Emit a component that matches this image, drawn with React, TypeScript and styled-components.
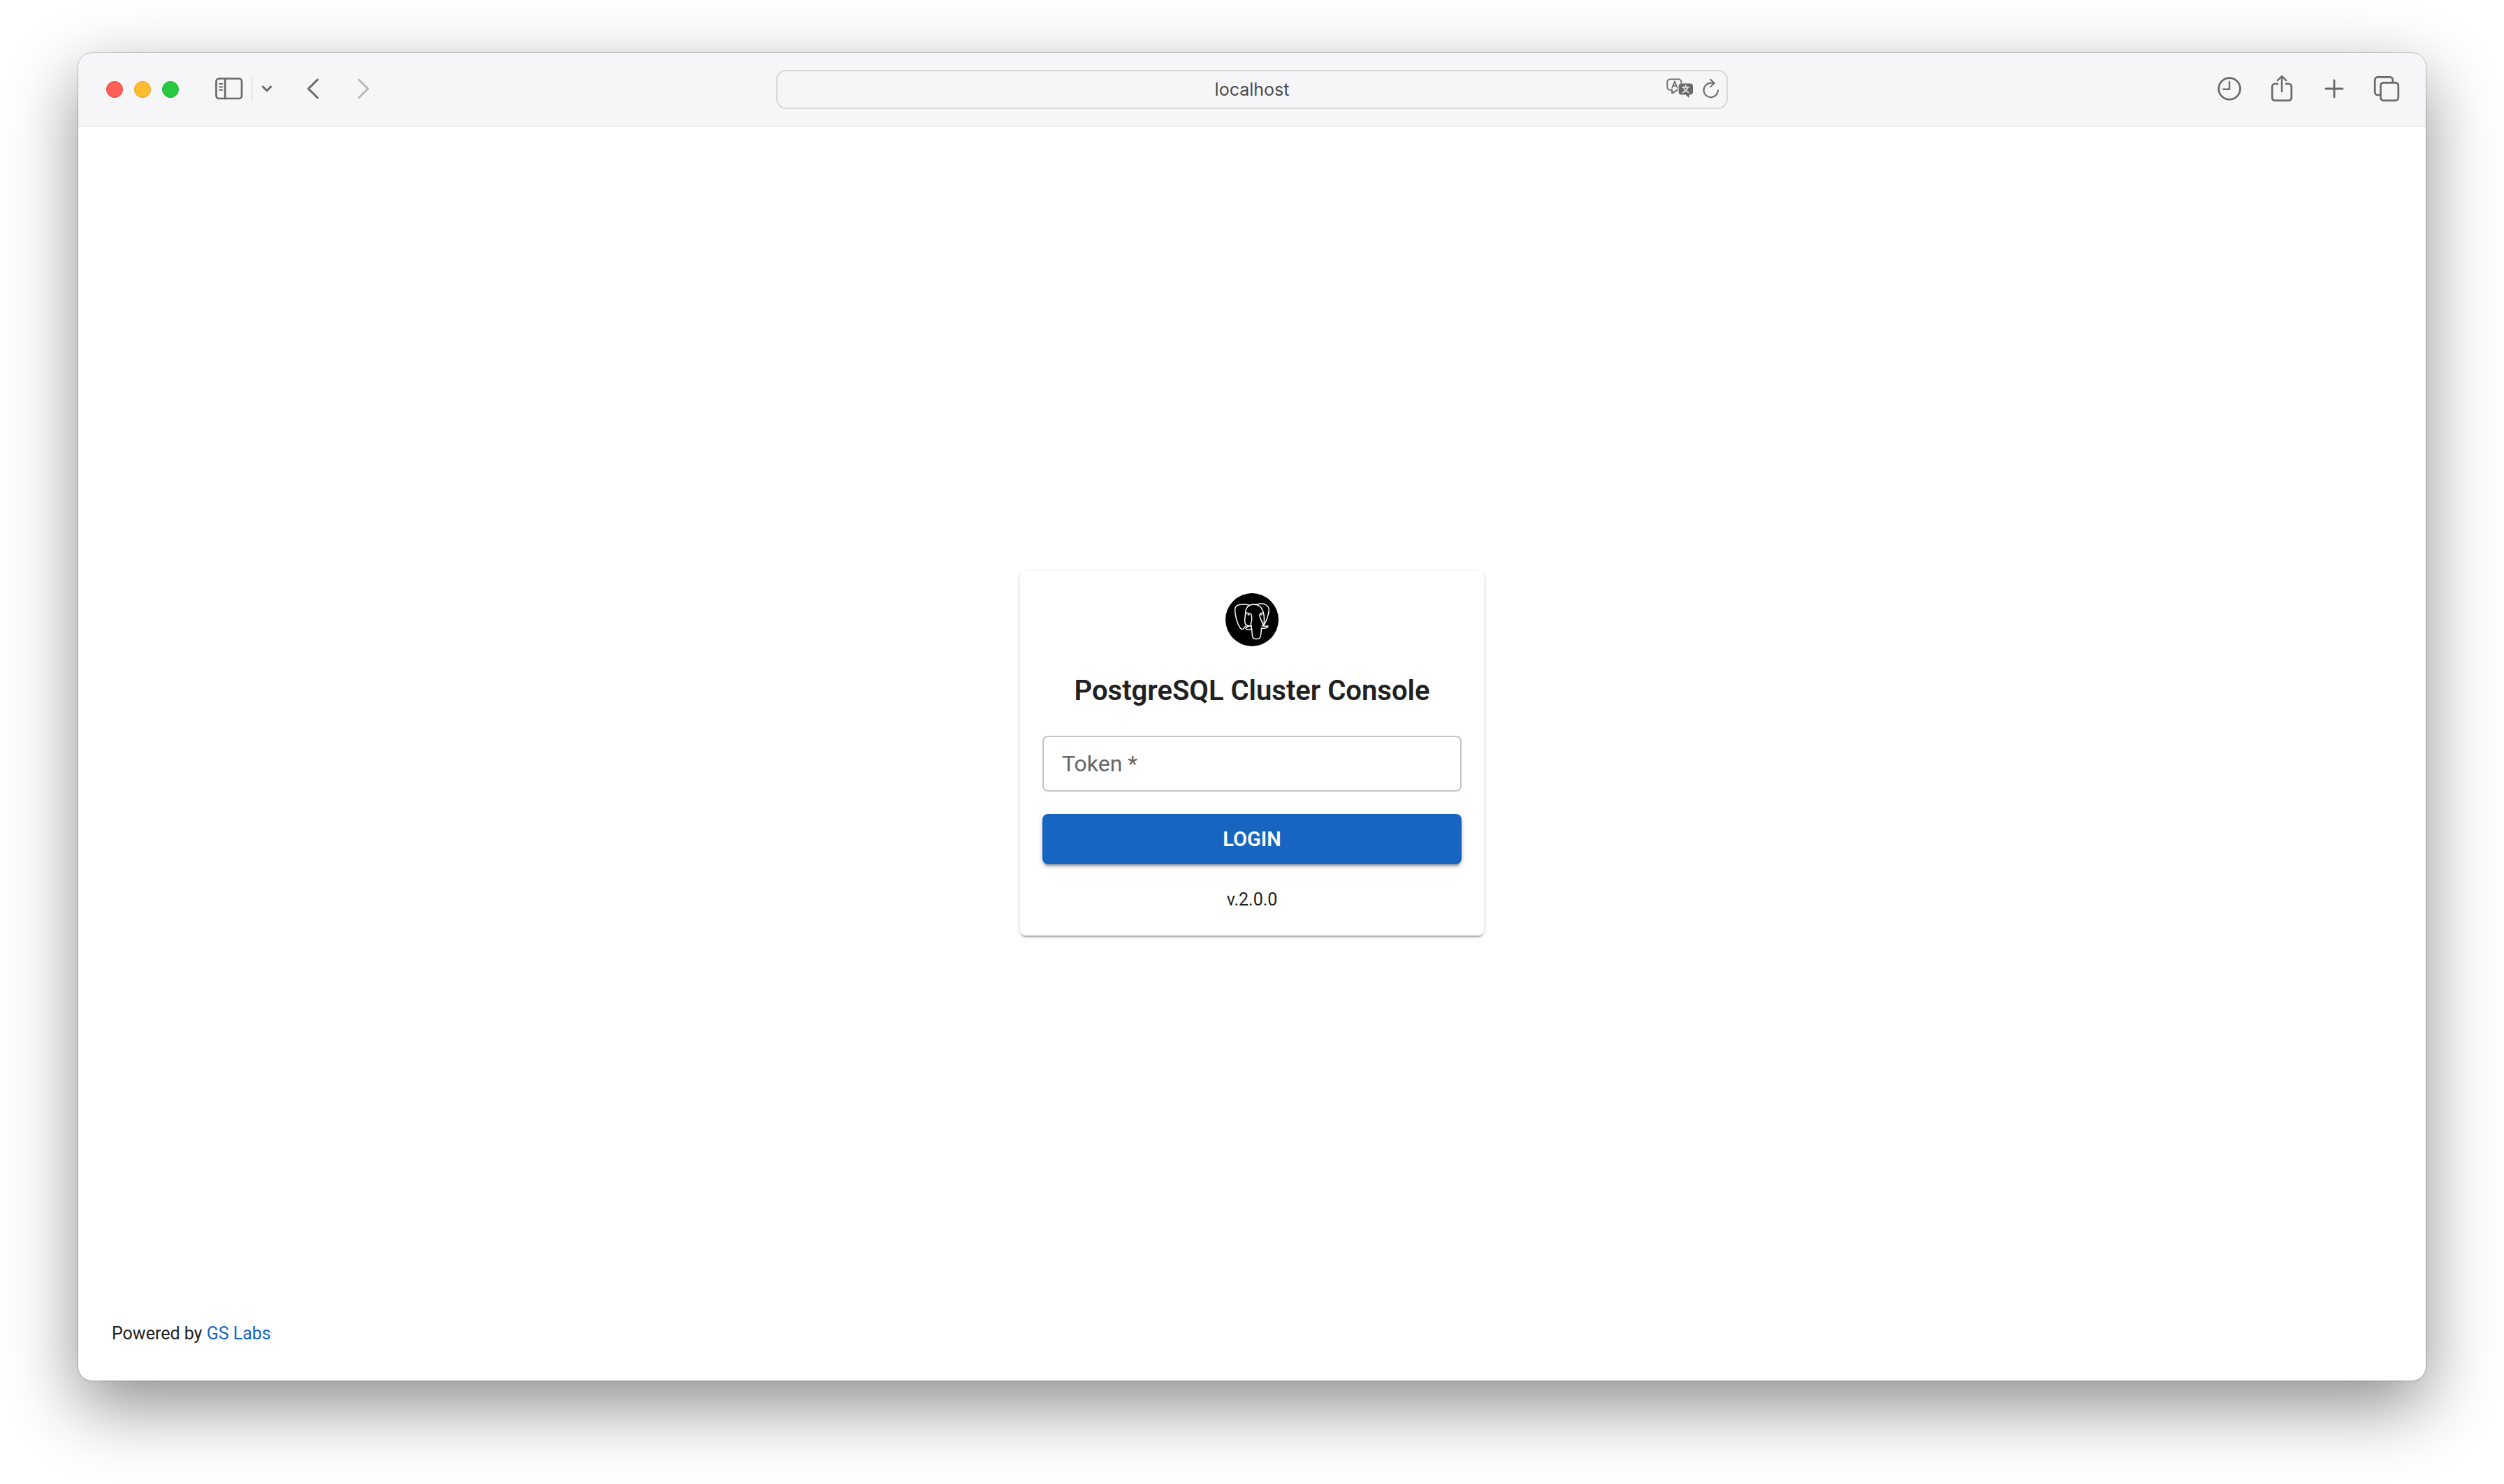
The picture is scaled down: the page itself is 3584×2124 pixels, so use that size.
import React, { useState } from "react";
import styled, { createGlobalStyle } from "styled-components";

const GlobalStyle = createGlobalStyle`
  *, *::before, *::after { box-sizing: border-box; }
  body {
    margin: 0;
    background: #ffffff;
    color: #212121;
    font-family: Roboto, "Liberation Sans", sans-serif;
  }
`;

const Desktop = styled.div`
  display: flex;
  min-height: 100vh;
  padding: 76px 112px 148px;
`;

const BrowserWindow = styled.div`
  flex: 1;
  display: flex;
  flex-direction: column;
  overflow: hidden;
  background: #ffffff;
  border-radius: 20px;
  box-shadow: 0 0 0 1px rgba(0, 0, 0, 0.22), 0 36px 100px rgba(0, 0, 0, 0.45);
`;

const Toolbar = styled.header`
  display: grid;
  grid-template-columns: 1fr 1362px 1fr;
  align-items: center;
  height: 105px;
  background: #f6f6f9;
  border-bottom: 1px solid #d4d4d6;
`;

const ToolbarStart = styled.div`
  display: flex;
  align-items: center;
  padding-left: 40px;
`;

const ToolbarEnd = styled.div`
  display: flex;
  align-items: center;
  justify-content: flex-end;
  gap: 27px;
  padding-right: 32px;
`;

const TrafficLights = styled.div`
  display: flex;
  gap: 16px;
  margin-right: 52px;
`;

const Light = styled.button<{ $fill: string; $edge: string }>`
  width: 24px;
  height: 24px;
  padding: 0;
  border: 1px solid ${(p) => p.$edge};
  border-radius: 50%;
  background: ${(p) => p.$fill};
`;

const IconButton = styled.button<{ $width?: number; $dim?: boolean }>`
  display: flex;
  align-items: center;
  justify-content: center;
  width: ${(p) => p.$width ?? 40}px;
  height: 48px;
  padding: 0 0 2px;
  border: 0;
  background: none;
  color: ${(p) => (p.$dim ? "#b9b9bc" : "#69696b")};

  svg {
    display: block;
    flex: none;
    fill: none;
    stroke: currentColor;
    stroke-linecap: round;
    stroke-linejoin: round;
  }
`;

const Divider = styled.span`
  width: 2px;
  height: 36px;
  margin: 0 8px 0 12px;
  background: #e6e6e8;
`;

const HistoryButtons = styled.div`
  display: flex;
  gap: 32px;
  margin-left: 34px;
`;

const AddressBar = styled.div`
  display: grid;
  grid-template-columns: 96px 1fr 96px;
  align-items: center;
  height: 56px;
  border: 2px solid #d8d8db;
  border-radius: 14px;
`;

const AddressInput = styled.input`
  grid-column: 2;
  min-width: 0;
  height: 48px;
  padding: 0;
  border: 0;
  outline: 0;
  background: none;
  color: #4b4b4d;
  font: 400 25px Inter, "Liberation Sans", sans-serif;
  text-align: center;
`;

const AddressActions = styled.div`
  display: flex;
  justify-content: flex-end;
  gap: 12px;
  padding-right: 10px;
`;

const Page = styled.div`
  flex: 1;
  display: grid;
  grid-template-rows: 1fr auto 1fr;
  padding: 0 48px 2px;
`;

const LoginCard = styled.main`
  grid-row: 2;
  justify-self: center;
  width: 664px;
  padding: 32px;
  border-radius: 8px;
  background: #ffffff;
  box-shadow: 0 4px 2px -2px rgba(0, 0, 0, 0.2), 0 2px 2px rgba(0, 0, 0, 0.14),
    0 2px 6px rgba(0, 0, 0, 0.12);
`;

const LoginForm = styled.form`
  display: flex;
  flex-direction: column;
  align-items: center;
  gap: 32px;
`;

const Title = styled.h1`
  margin: 0;
  font-size: 40px;
  font-weight: 600;
  line-height: 64px;
`;

const Field = styled.div`
  position: relative;
  width: 100%;
`;

const FieldLabel = styled.label`
  position: absolute;
  top: 16px;
  left: 28px;
  color: #666666;
  font-size: 32px;
  line-height: 48px;
  pointer-events: none;
`;

const FieldInput = styled.input`
  display: block;
  width: 100%;
  height: 80px;
  padding: 0 26px;
  border: 2px solid #c4c4c4;
  border-radius: 8px;
  outline: 0;
  background: none;
  font: 400 32px Roboto, "Liberation Sans", sans-serif;

  &:focus {
    border-color: #1565c0;
  }
`;

const LoginButton = styled.button`
  width: 100%;
  height: 72px;
  padding: 0;
  border: 0;
  border-radius: 8px;
  background: #1765c0;
  color: #ffffff;
  font: 600 29px Roboto, "Liberation Sans", sans-serif;
  text-transform: uppercase;
  box-shadow: 0 6px 2px -4px rgba(0, 0, 0, 0.2), 0 4px 4px rgba(0, 0, 0, 0.14),
    0 2px 10px rgba(0, 0, 0, 0.12);
`;

const Caption = styled.p`
  margin: 0;
  font-size: 25px;
  line-height: 38px;
`;

const Footer = styled.footer`
  grid-row: 3;
  align-self: end;
  padding-bottom: 46px;
`;

const FooterLink = styled.a`
  color: #1565c0;
  text-decoration: none;
`;

const SidebarIcon = () => (
  <svg width="40" height="32" viewBox="0 0 40 32" strokeWidth="2.7">
    <rect x="1.5" y="1.5" width="36.5" height="28.5" rx="4" />
    <path d="M14.2 1.5V30" />
    <path d="M6.2 9h4M6.2 13.4h4M6.2 17.8h4" strokeWidth="2" />
  </svg>
);

const ChevronDownIcon = () => (
  <svg width="16" height="12" viewBox="0 0 16 12" strokeWidth="3">
    <path d="M2.3 3 8 8.8 13.7 3" />
  </svg>
);

const BackIcon = () => (
  <svg width="18" height="32" viewBox="0 0 18 32" strokeWidth="3">
    <path d="M15.5 3 2.4 16l13.1 13" />
  </svg>
);

const ForwardIcon = () => (
  <svg width="18" height="32" viewBox="0 0 18 32" strokeWidth="3">
    <path d="M2.5 3l13.1 13L2.5 29" />
  </svg>
);

const TranslateIcon = () => (
  <svg width="40" height="30" viewBox="0 0 40 30" strokeWidth="1.9">
    <path d="M16 16.6 8.2 21.6V16.8H5.4a4 4 0 0 1-4-4V5.4a4 4 0 0 1 4-4h12a4 4 0 0 1 4 4v1.4" />
    <path d="M8.2 13.8 12 4.4l3.8 9.4M9.4 10.9h5.2" strokeWidth="1.7" />
    <path
      d="M21.5 7.4h12.7a3.8 3.8 0 0 1 3.8 3.8v8.6a3.8 3.8 0 0 1-3.8 3.8h-1.4v4.6l-5.4-4.6h-5.9a3.8 3.8 0 0 1-3.8-3.8v-8.6a3.8 3.8 0 0 1 3.8-3.8z"
      fill="currentColor"
      stroke="none"
    />
    <path
      d="M27.7 10.2v2M23 12.8h9.5M24.9 13.4c.8 3 3.2 5.4 6.8 6.8M30.6 13.4c-.8 3-3.400 5.400-7 6.800"
      stroke="#f6f6f9"
      strokeWidth="1.6"
    />
  </svg>
);

const ReloadIcon = () => (
  <svg width="24" height="30" viewBox="0 0 24 30" strokeWidth="2">
    <path d="M22 17.2a10.200 10.200 0 1 1-10.200-10.400h4.600" />
    <path d="M11.2 1.8l5.400 5.200-5.400 5.400" />
  </svg>
);

const ClockIcon = () => (
  <svg width="36" height="36" viewBox="0 0 36 36" strokeWidth="2.7">
    <circle cx="18" cy="18" r="15.4" />
    <path d="M18 8.2v10.6H9.4" strokeWidth="2.4" />
  </svg>
);

const ShareIcon = () => (
  <svg width="32" height="42" viewBox="0 0 32 42" strokeWidth="2.7">
    <path
      d="M11 14H6a3.800 3.800 0 0 0-3.800 3.800V34A3.800 3.800 0 0 0 6 37.800h20A3.800 3.800 0 0 0 29.800 34V17.800A3.800 3.800 0 0 0 26 14h-5"
      strokeLinecap="butt"
    />
    <path d="M16 25V4M9.800 9.200 16 3l6.200 6.200" strokeWidth="2.4" />
  </svg>
);

const PlusIcon = () => (
  <svg width="30" height="30" viewBox="0 0 30 30" strokeWidth="2.9">
    <path d="M15 3v24M3 15h24" />
  </svg>
);

const TabsIcon = () => (
  <svg width="38" height="38" viewBox="0 0 38 38" strokeWidth="2.7">
    <path d="M9.500 28H6.200A4 4 0 0 1 2.200 24V6.400a4 4 0 0 1 4-4h17.600a4 4 0 0 1 4 4V9.500" />
    <rect x="10.4" y="10.4" width="25.4" height="25.4" rx="4" />
  </svg>
);

const ElephantLogo = () => (
  <svg width="76" height="76" viewBox="0 0 228 228" role="img" aria-label="PostgreSQL">
    <circle cx="114" cy="114" r="114" fill="#000000" />
    <g fill="none" stroke="#ffffff" strokeWidth="4.5" strokeLinecap="round" strokeLinejoin="round">
      <path d="M101 51C88 48 70 47 57 50C44 53 40 64 41 76C43 101 50 128 62 147C67 155 72 157 77 152L87 141" />
      <path d="M86 88C86 65 96 49 122 48C148 48 161 69 165 93C167 109 167 125 164 138" />
      <path d="M86 89C93 83 106 84 111 91C114 104 114 121 108 134L112 142" />
      <path d="M86 89C84 104 81 119 84 128C87 137 93 139 99 140" />
      <path d="M130 50C144 43 166 44 176 51C189 60 189 76 183 94C178 113 172 128 164 138C158 124 147 109 147 94C148 84 156 83 162 86" />
      <path d="M87 151C93 144 102 138 112 142C113 151 109 156 101 157C95 158 89 156 87 151Z" />
      <path d="M112 149C115 163 113 178 117 189C121 199 147 199 150 187C154 173 153 160 155 150" />
      <path d="M157 139C166 144 175 141 183 141C180 151 170 152 155 150" />
      <path d="M97 92h5M153 92h3" strokeWidth="5" />
    </g>
  </svg>
);

export default function App() {
  const [address, setAddress] = useState("localhost");
  const [token, setToken] = useState("");

  return (
    <>
      <GlobalStyle />
      <Desktop>
        <BrowserWindow>
          <Toolbar>
            <ToolbarStart>
              <TrafficLights>
                <Light aria-label="Close" $fill="#ff5f57" $edge="#e2463f" />
                <Light aria-label="Minimize" $fill="#febc2e" $edge="#e0a028" />
                <Light aria-label="Zoom" $fill="#28c840" $edge="#1eaf2f" />
              </TrafficLights>
              <IconButton aria-label="Show sidebar">
                <SidebarIcon />
              </IconButton>
              <Divider />
              <IconButton aria-label="Sidebar options" $width={24}>
                <ChevronDownIcon />
              </IconButton>
              <HistoryButtons>
                <IconButton aria-label="Back">
                  <BackIcon />
                </IconButton>
                <IconButton aria-label="Forward" $dim>
                  <ForwardIcon />
                </IconButton>
              </HistoryButtons>
            </ToolbarStart>
            <AddressBar>
              <AddressInput
                aria-label="Address"
                value={address}
                onChange={(e) => setAddress(e.target.value)}
              />
              <AddressActions>
                <IconButton aria-label="Translate">
                  <TranslateIcon />
                </IconButton>
                <IconButton aria-label="Reload" $width={24}>
                  <ReloadIcon />
                </IconButton>
              </AddressActions>
            </AddressBar>
            <ToolbarEnd>
              <IconButton aria-label="History" $width={48}>
                <ClockIcon />
              </IconButton>
              <IconButton aria-label="Share" $width={48}>
                <ShareIcon />
              </IconButton>
              <IconButton aria-label="New tab" $width={48}>
                <PlusIcon />
              </IconButton>
              <IconButton aria-label="Tab overview" $width={48}>
                <TabsIcon />
              </IconButton>
            </ToolbarEnd>
          </Toolbar>
          <Page>
            <LoginCard>
              <LoginForm onSubmit={(e) => e.preventDefault()}>
                <ElephantLogo />
                <Title>PostgreSQL Cluster Console</Title>
                <Field>
                  {token === "" && <FieldLabel htmlFor="token">Token *</FieldLabel>}
                  <FieldInput
                    id="token"
                    aria-label="Token"
                    required
                    value={token}
                    onChange={(e) => setToken(e.target.value)}
                  />
                </Field>
                <LoginButton type="submit">Login</LoginButton>
                <Caption>v.2.0.0</Caption>
              </LoginForm>
            </LoginCard>
            <Footer>
              <Caption>
                Powered by <FooterLink href="#gs-labs">GS Labs</FooterLink>
              </Caption>
            </Footer>
          </Page>
        </BrowserWindow>
      </Desktop>
    </>
  );
}
